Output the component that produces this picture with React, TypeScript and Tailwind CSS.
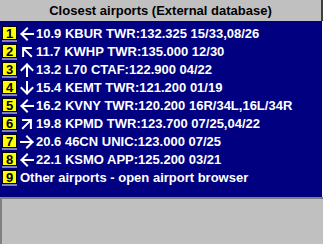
import React from "react";

const rows: { k: string; rot: string; text: string }[] = [
  { k: "1", rot: "rotate-0", text: "10.9 KBUR TWR:132.325 15/33,08/26" },
  { k: "2", rot: "rotate-45", text: "11.7 KWHP TWR:135.000 12/30" },
  { k: "3", rot: "rotate-90", text: "13.2 L70 CTAF:122.900 04/22" },
  { k: "4", rot: "-rotate-90", text: "15.4 KEMT TWR:121.200 01/19" },
  { k: "5", rot: "rotate-0", text: "16.2 KVNY TWR:120.200 16R/34L,16L/34R" },
  { k: "6", rot: "rotate-135", text: "19.8 KPMD TWR:123.700 07/25,04/22" },
  { k: "7", rot: "rotate-180", text: "20.6 46CN UNIC:123.000 07/25" },
  { k: "8", rot: "rotate-0", text: "22.1 KSMO APP:125.200 03/21" },
];

function Key({ k }: { k: string }) {
  return (
    <div className="flex flex-col w-[15px] shrink-0">
      <div className="w-[15px] h-[14px] bg-[#ffff00] border border-black flex items-center justify-center text-black text-[13px] font-bold leading-none">
        {k}
      </div>
      <div className="h-[2px] bg-[#8080c0]" />
    </div>
  );
}

function Arrow({ rot }: { rot: string }) {
  return (
    <svg width="14" height="14" viewBox="0 0 14 14" className={`shrink-0 mt-[1px] ${rot}`}>
      <path d="M1.5 7 H13 M7 1.5 L1.5 7 L7 12.5" stroke="white" strokeWidth="2" fill="none" strokeLinecap="square" />
    </svg>
  );
}

export default function App() {
  return (
    <div
      className="w-[323px] h-[244px] bg-[#c0c0c0] flex flex-col overflow-hidden"
      style={{ fontFamily: '"Liberation Sans", Arial, sans-serif' }}
    >
      <div className="h-[21px] flex items-center justify-center border-r-2 border-[#404040] text-black font-bold text-[13px]">
        Closest airports (External database)
      </div>
      <div className="h-[176px] bg-[#000080] flex flex-col pt-[5px] border-r border-white">
        {rows.map((r) => (
          <div key={r.k} className="h-[18px] flex items-start pl-[2px] text-white font-bold text-[13px] leading-[16px]">
            <Key k={r.k} />
            <div className="w-[19px] flex justify-center">
              <Arrow rot={r.rot} />
            </div>
            <span>{r.text}</span>
          </div>
        ))}
        <div className="h-[18px] flex items-start pl-[2px] gap-[3px] text-white font-bold text-[13px] leading-[16px]">
          <Key k="9" />
          <span>Other airports - open airport browser</span>
        </div>
      </div>
      <div className="flex-1 border-t-2 border-l-2 border-[#808080]" />
    </div>
  );
}
